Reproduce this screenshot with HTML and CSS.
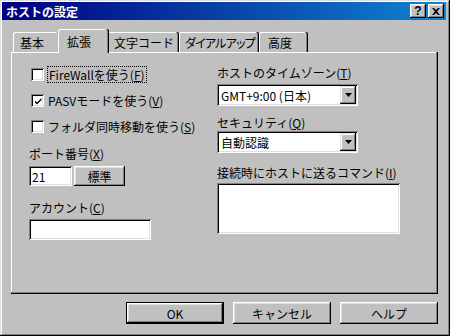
FILE: index.html
```html
<!DOCTYPE html>
<html lang="ja">
<head>
  <meta charset="UTF-8">
  <title>ホストの設定</title>
  <link rel="stylesheet" href="styles.css">
</head>
<body>
  <div class="window">
    <div class="titlebar">
      <span class="title">ホストの設定</span>
      <div class="title-btns">
        <button type="button" class="tbtn help-q">?</button>
        <button type="button" class="tbtn">
          <svg width="8" height="7" viewBox="0 0 8 7"><path d="M0 0h2l2 2 2-2h2L5 3.5 8 7H6L4 5 2 7H0l3-3.5z" fill="#000"/></svg>
        </button>
      </div>
    </div>

    <div class="content">
      <div class="tabs">
        <div class="tab t-basic">基本</div>
        <div class="tab t-ext active">拡張</div>
        <div class="tab t-code">文字コード</div>
        <div class="tab t-dial">ダイアルアップ</div>
        <div class="tab t-adv">高度</div>
      </div>

      <div class="panel">
        <div class="col left">
          <div class="check">
            <span class="box"></span>
            <span class="focus">FireWallを使う(<u>F</u>)</span>
          </div>
          <div class="check">
            <span class="box"><svg width="9" height="9" viewBox="0 0 9 9"><path d="M1 3.5l2 2 4.5-4.5v2L3 7.5l-2-2z" fill="#000"/></svg></span>
            <span>PASVモードを使う(<u>V</u>)</span>
          </div>
          <div class="check">
            <span class="box"></span>
            <span>フォルダ同時移動を使う(<u>S</u>)</span>
          </div>

          <div class="field-label port-label">ポート番号(<u>X</u>)</div>
          <div class="port-row">
            <div class="input port">21</div>
            <button type="button" class="btn std">標準</button>
          </div>

          <div class="field-label account-label">アカウント(<u>C</u>)</div>
          <div class="input account"></div>
        </div>

        <div class="col right">
          <div class="field-label tz-label">ホストのタイムゾーン(<u>T</u>)</div>
          <div class="select sel-tz">
            <span class="sel-text">GMT+9:00 (日本)</span>
            <span class="drop"><svg width="7" height="4" viewBox="0 0 7 4"><path d="M0 0h7L3.5 4z" fill="#000"/></svg></span>
          </div>

          <div class="field-label sec-label">セキュリティ(<u>Q</u>)</div>
          <div class="select sel-sec">
            <span class="sel-text">自動認識</span>
            <span class="drop"><svg width="7" height="4" viewBox="0 0 7 4"><path d="M0 0h7L3.5 4z" fill="#000"/></svg></span>
          </div>

          <div class="field-label cmd-label">接続時にホストに送るコマンド(<u>I</u>)</div>
          <div class="input cmd"></div>
        </div>
      </div>

      <div class="actions">
        <button type="button" class="btn big default">OK</button>
        <button type="button" class="btn big">キャンセル</button>
        <button type="button" class="btn big">ヘルプ</button>
      </div>
    </div>
  </div>
</body>
</html>
```

FILE: styles.css
```css
*{
  margin: 0; padding: 0;
  box-sizing: border-box;
}

body{
  font-family: "Noto Sans CJK JP", "Liberation Sans", sans-serif;
  font-size: 12px; line-height: 13px;
  color: #000;
  background: #c0c0c0;
}

u{ text-decoration: underline; text-underline-offset: 1px; }

/* 창 */
.window{
  width: 450px; height: 336px;
  background: #c0c0c0;
  padding: 2px 4px 3px 2px;
  display: flex; flex-direction: column;
  box-shadow: inset -1px -1px #000, inset 1px 1px #dfdfdf,
    inset -2px -2px #808080, inset 2px 2px #fff;
}

/* 타이틀바 */
.titlebar{
  height: 18px;
  background: linear-gradient(90deg, #000080, #1084d0);
  display: flex; align-items: center; justify-content: space-between;
  padding: 0 2px 0 4px;
  color: #fff; font-weight: bold;
}
.title-btns{
  display: flex; gap: 2px;
}
.tbtn{
  width: 16px; height: 14px;
  border: 0; background: #c0c0c0;
  display: flex; align-items: center; justify-content: center;
  font: bold 12px/12px "Liberation Sans", sans-serif;
  box-shadow: inset -1px -1px #000, inset 1px 1px #fff,
    inset -2px -2px #808080, inset 2px 2px #dfdfdf;
}

.content{
  flex: 1;
  padding: 9px 0 0 9px;
  display: flex; flex-direction: column;
}

/* 탭 */
.tabs{
  display: flex; align-items: flex-end;
  height: 23px; padding-left: 2px;
  position: relative; z-index: 1;
}
.tab{
  height: 20px;
  padding: 4px 0 0 7px;
  border-radius: 2px 2px 0 0;
  box-shadow: inset -1px 0 #000, inset -2px 0 #808080, inset 1px 1px #fff;
  white-space: nowrap;
}
.t-basic{ width: 47px; }
.t-ext{ width: 47px; }
.t-code{ width: 72px; }
.t-dial{ width: 80px; padding-left: 6px; font-feature-settings: "palt"; letter-spacing: -0.8px; }
.t-adv{ width: 49px; padding-left: 9px; }
.tab.active{
  height: 24px;
  margin: 0 -2px -1px;
  width: 51px;
  padding: 6px 0 0 9px;
  background: #c0c0c0;
  position: relative; z-index: 2;
}

/* 패널 */
.panel{
  width: 427px; height: 242px;
  display: flex;
  padding-left: 18px;
  box-shadow: inset -1px -1px #000, inset -2px -2px #808080, inset 1px 1px #fff;
}
.col{
  display: flex; flex-direction: column; align-items: flex-start;
}
.col.left{ width: 188px; padding-top: 16px; }
.col.right{ padding-top: 14px; }

.check{
  display: flex; align-items: center; gap: 4px;
  height: 13px; margin-left: 2px;
}
.check + .check{ margin-top: 13px; }
.box{
  width: 13px; height: 13px;
  background: #fff;
  display: flex; align-items: center; justify-content: center;
  box-shadow: inset 1px 1px #808080, inset -1px -1px #fff,
    inset 2px 2px #000, inset -2px -2px #dfdfdf;
}
.box svg{ margin: 1px 0 0 1px; }
.focus{
  outline: 1px dotted #000;
  padding: 1px 1px;
}

.port-label{ margin-top: 14px; }
.port-row{
  display: flex; gap: 2px;
  margin-top: 6px;
}
.account-label{ margin-top: 15px; }
.account{ margin-top: 5px; width: 122px; height: 21px; }

.input{
  background: #fff;
  padding: 4px 3px;
  box-shadow: inset 1px 1px #808080, inset -1px -1px #fff,
    inset 2px 2px #000, inset -2px -2px #dfdfdf;
}
.port{ width: 43px; height: 20px; }

.btn{
  border: 0; background: #c0c0c0;
  font: inherit; color: #000;
  box-shadow: inset -1px -1px #000, inset 1px 1px #fff,
    inset -2px -2px #808080, inset 2px 2px #dfdfdf;
}
.std{ width: 51px; height: 20px; }

/* 오른쪽 */
.select{
  width: 141px; height: 22px;
  background: #fff;
  display: flex; align-items: center;
  padding: 2px;
  margin-top: 5px;
  box-shadow: inset 1px 1px #808080, inset -1px -1px #fff,
    inset 2px 2px #000, inset -2px -2px #dfdfdf;
}
.sel-text{ flex: 1; padding-left: 2px; white-space: nowrap; }
.drop{
  width: 16px; height: 18px;
  background: #c0c0c0;
  display: flex; align-items: center; justify-content: center;
  box-shadow: inset -1px -1px #000, inset 1px 1px #dfdfdf,
    inset -2px -2px #808080, inset 2px 2px #fff;
}
.sec-label{ margin-top: 10px; }
.sel-sec{ margin-top: 2px; }
.cmd-label{ margin-top: 13px; }
.cmd{ margin-top: 4px; width: 183px; height: 51px; }

/* 하단 버튼 */
.actions{
  width: 427px;
  display: flex; justify-content: flex-end; gap: 9px;
  margin-top: 8px;
}
.big{ width: 98px; height: 22px; }
.big.default{
  box-shadow: inset 0 0 0 1px #000, inset -2px -2px #000,
    inset 2px 2px #fff, inset -3px -3px #808080, inset 3px 3px #dfdfdf;
}
```
